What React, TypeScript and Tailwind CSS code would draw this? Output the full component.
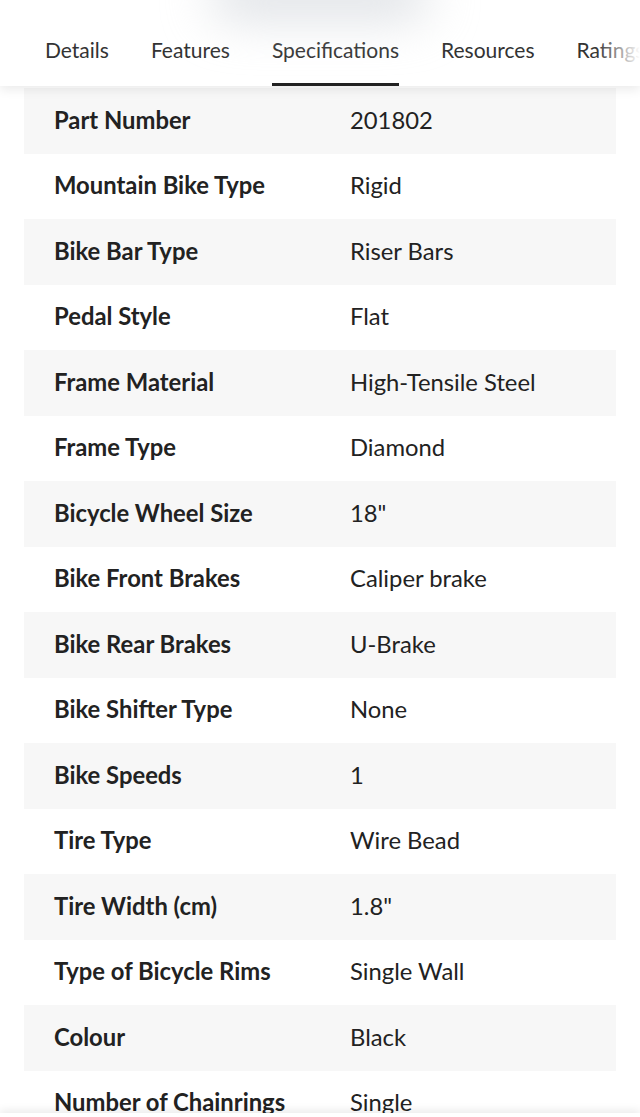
import React from "react"

const specs: [string, string][] = [
  ["Part Number", "201802"],
  ["Mountain Bike Type", "Rigid"],
  ["Bike Bar Type", "Riser Bars"],
  ["Pedal Style", "Flat"],
  ["Frame Material", "High-Tensile Steel"],
  ["Frame Type", "Diamond"],
  ["Bicycle Wheel Size", '18"'],
  ["Bike Front Brakes", "Caliper brake"],
  ["Bike Rear Brakes", "U-Brake"],
  ["Bike Shifter Type", "None"],
  ["Bike Speeds", "1"],
  ["Tire Type", "Wire Bead"],
  ["Tire Width (cm)", '1.8"'],
  ["Type of Bicycle Rims", "Single Wall"],
  ["Colour", "Black"],
  ["Number of Chainrings", "Single"],
]

const tabs = ["Details", "Features", "Specifications", "Resources", "Ratings"]

export default function App() {
  return (
    <div className="relative h-[1117px] w-[640px] overflow-hidden bg-white text-[#222] [font-family:Lato,'Noto_Sans',sans-serif]">
      {/* blurred thing peeking in from above */}
      <div className="pointer-events-none absolute left-[210px] top-[-28px] z-20 h-[48px] w-[220px] rounded-full bg-gray-300/70 blur-xl" />

      <div className="relative z-10 flex h-[86px] items-stretch bg-white pl-6 shadow-[0_4px_10px_rgba(0,0,0,0.08)]">
        {tabs.map((t) => (
          <div key={t} className="flex shrink-0 flex-col px-[21px]">
            <div className="flex flex-1 items-center pt-[16px] text-[21px] whitespace-nowrap text-[#333]">{t}</div>
            <div className={`h-[3px] ${t === "Specifications" ? "bg-[#222]" : "bg-transparent"}`} />
          </div>
        ))}
        <div className="pointer-events-none absolute right-0 top-0 h-full w-[44px] bg-gradient-to-r from-white/0 to-white" />
      </div>

      <div className="px-6 pt-[2px]">
        {specs.map(([k, v], i) => (
          <div
            key={k}
            className={`flex h-[65.5px] items-center px-[30px] text-[23.8px] ${i % 2 === 0 ? "bg-[#f7f7f7]" : "bg-white"}`}
          >
            <div className="w-[296px] font-bold">{k}</div>
            <div>{v}</div>
          </div>
        ))}
      </div>

      <div className="absolute bottom-[-40px] left-0 h-[44px] w-full bg-white shadow-[0_-3px_8px_rgba(0,0,0,0.08)]" />
    </div>
  )
}
